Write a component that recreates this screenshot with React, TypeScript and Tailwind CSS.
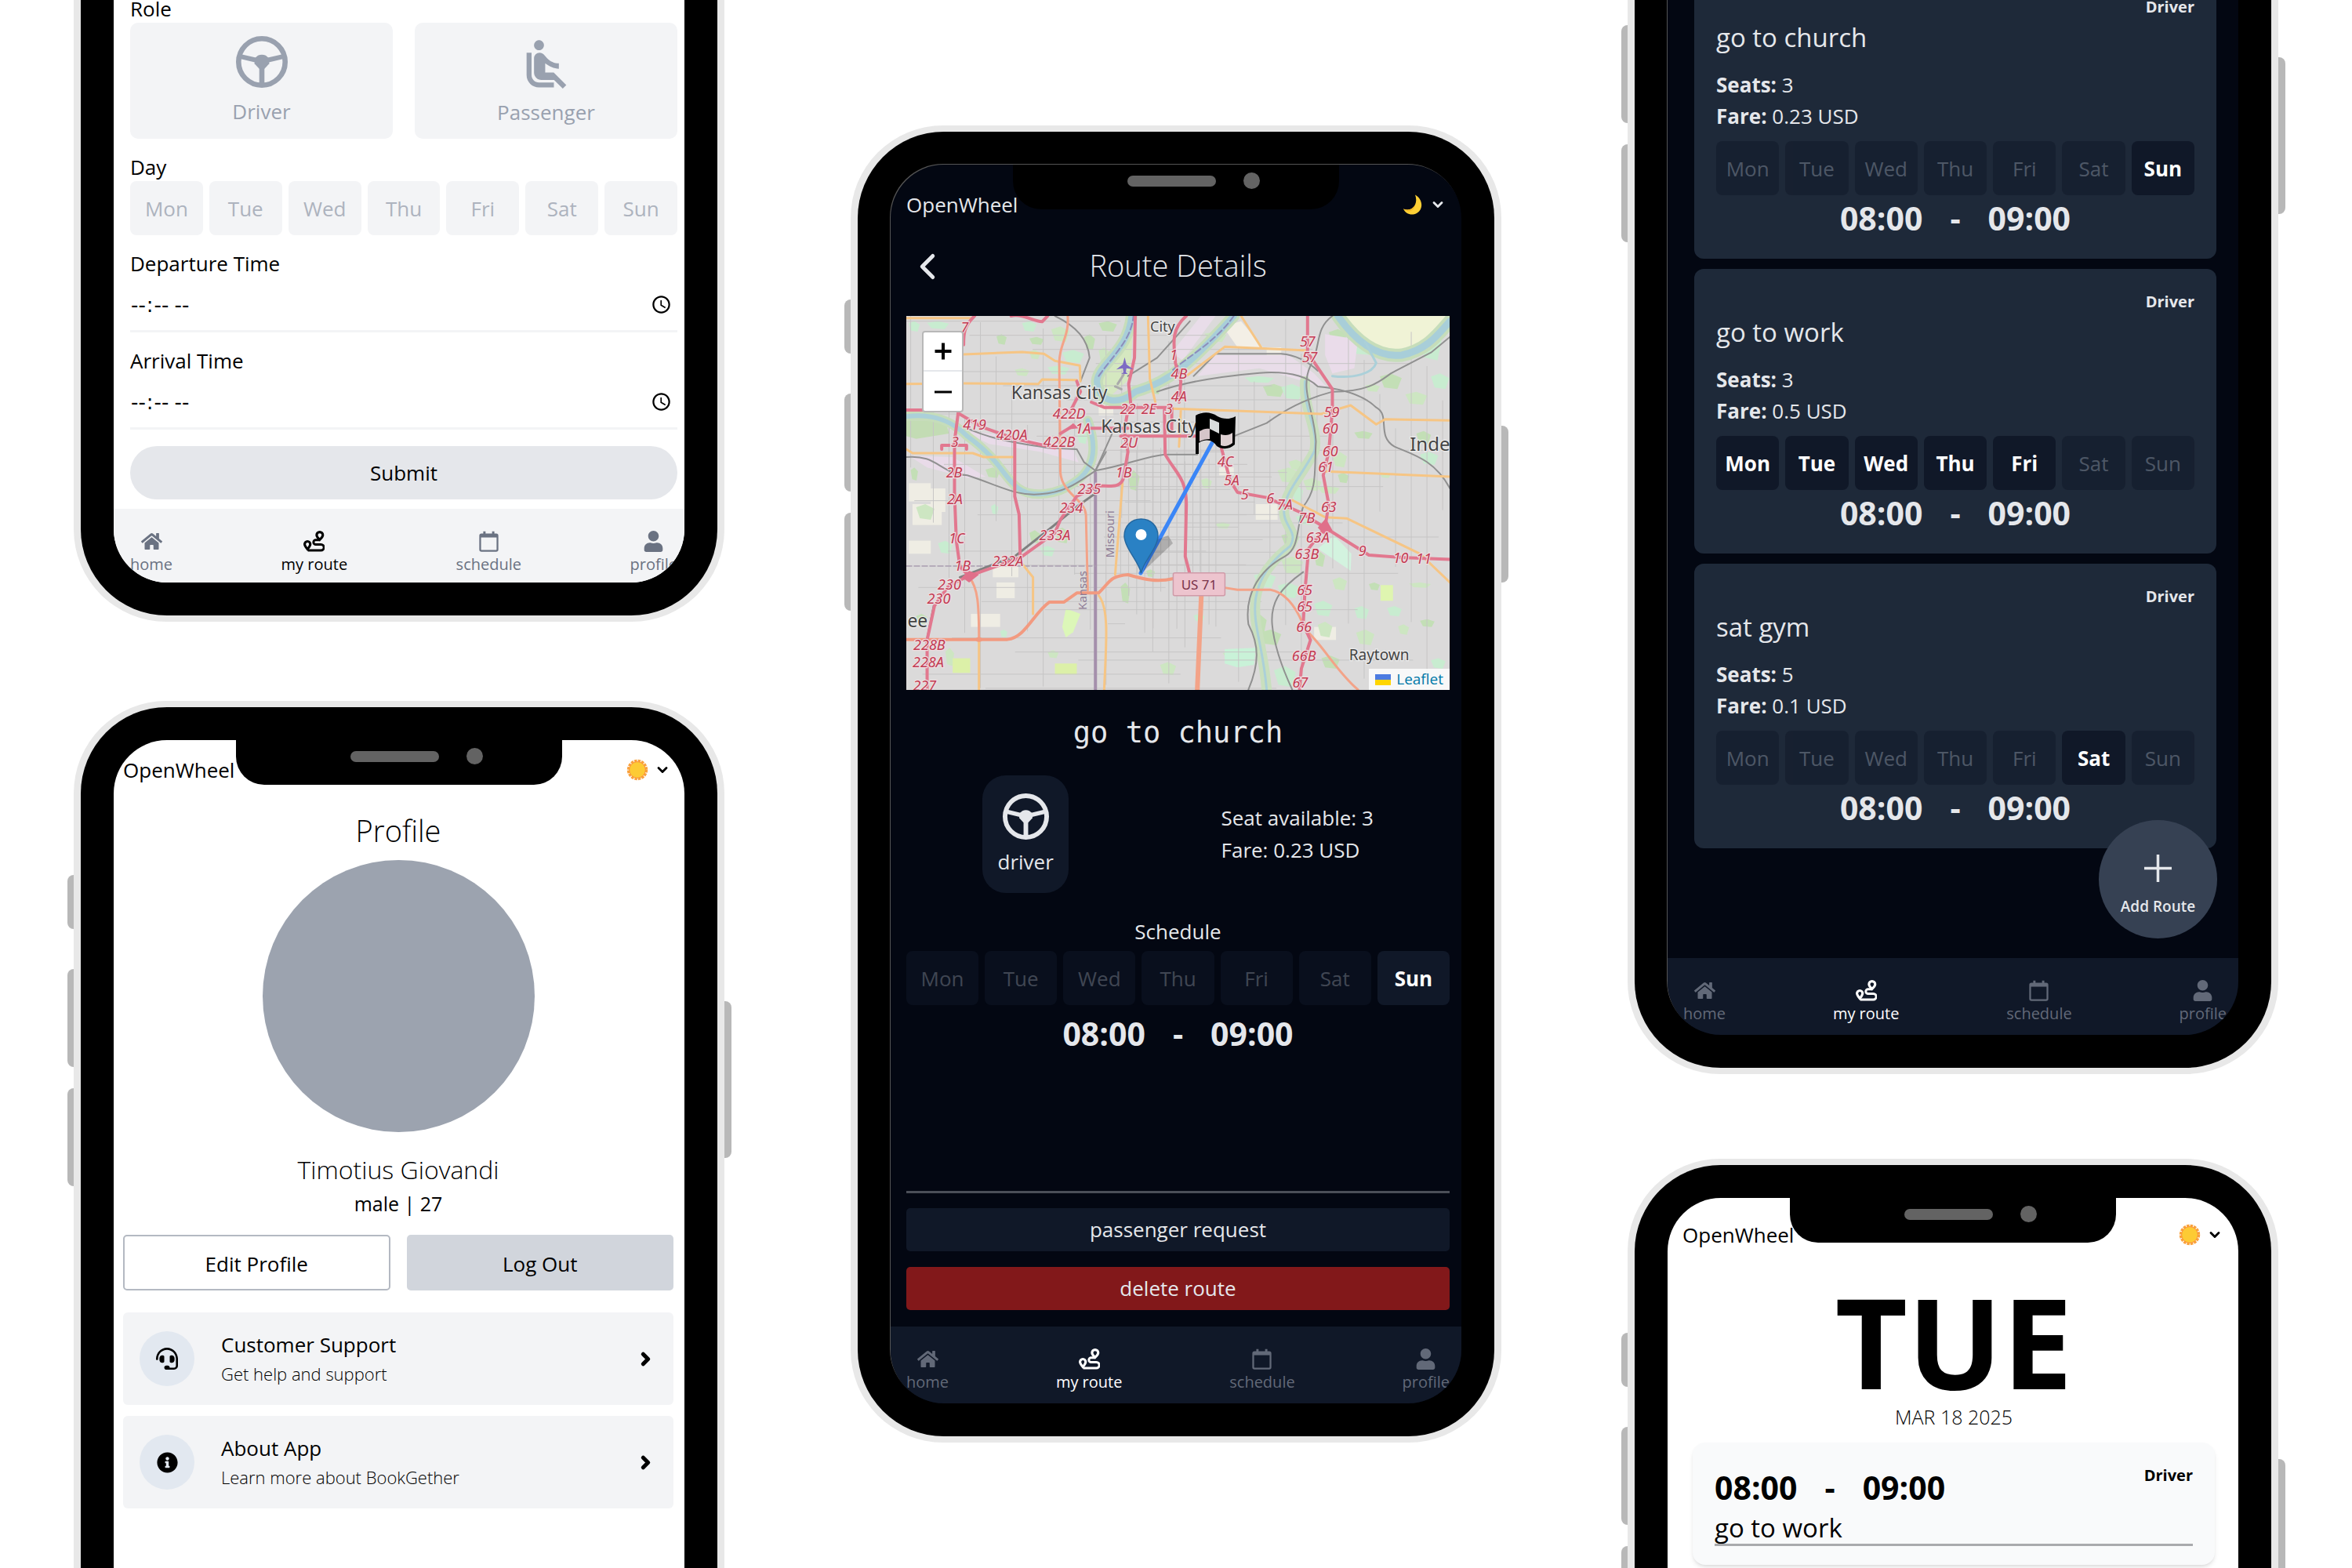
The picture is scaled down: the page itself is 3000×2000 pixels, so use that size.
import React from "react";
import { FaHeadset, FaHome, FaInfoCircle, FaUser } from "react-icons/fa";
import { MdAirlineSeatReclineNormal } from "react-icons/md";
import { ChevronDown, ChevronLeft, ChevronRight } from "lucide-react";

const DAYS = ["Mon", "Tue", "Wed", "Thu", "Fri", "Sat", "Sun"];

/* ---------- icons ---------- */

function SteeringWheel({ className }: { className?: string }) {
  return (
    <svg viewBox="0 0 24 24" fill="none" className={className} aria-hidden="true">
      <circle cx="12" cy="12" r="10.8" stroke="currentColor" strokeWidth="2.4" />
      <path d="M1.800 9.400 L9.400 11.200 M22.200 9.400 L14.600 11.200" stroke="currentColor" strokeWidth="2.2" />
      <path d="M12 13 V22.400" stroke="currentColor" strokeWidth="2.4" />
      <path
        d="M8.600 10.400 L10.200 9 Q12 8.200 13.800 9 L15.400 10.400 V12.800 L13.200 15.200 H10.800 L8.600 12.800 Z"
        fill="currentColor"
      />
    </svg>
  );
}

function RouteIcon({ className }: { className?: string }) {
  return (
    <svg viewBox="0 0 24 24" fill="none" stroke="currentColor" className={className} aria-hidden="true">
      <path
        d="M18.5 1.4 a3.5 3.5 0 0 1 3.5 3.5 c0 1.9 -3.5 5.3 -3.5 5.3 s-3.5 -3.4 -3.5 -5.3 a3.5 3.5 0 0 1 3.5 -3.5 Z"
        strokeWidth="2.8"
      />
      <path
        d="M4.6 12 a3.2 3.2 0 0 1 3.2 3.2 c0 1.9 -3.2 5.8 -3.2 5.8 s-3.2 -3.9 -3.2 -5.8 a3.2 3.2 0 0 1 3.2 -3.2 Z"
        strokeWidth="2.8"
      />
      <path d="M18 10.4 H14 a2.6 2.6 0 0 0 0 5.2 H20 a3 3 0 0 1 0 6.6 H5" strokeWidth="2.6" />
    </svg>
  );
}

function CalendarIcon({ className }: { className?: string }) {
  return (
    <svg viewBox="0 0 24 24" fill="none" stroke="currentColor" className={className} aria-hidden="true">
      <rect x="2.2" y="4.2" width="19.6" height="18.6" rx="1.4" strokeWidth="2" />
      <path d="M2.2 6 H21.8" strokeWidth="3.2" />
      <path d="M7 0.6 V5 M17 0.6 V5" strokeWidth="2.6" />
    </svg>
  );
}

function Sun() {
  return (
    <svg viewBox="0 0 28 28" className="size-7" aria-hidden="true">
      <circle cx="14" cy="14" r="11.4" fill="none" stroke="#f9a23c" strokeWidth="3.6" strokeDasharray="3.4 1.1" />
      <circle cx="14" cy="14" r="10.4" fill="#fdcb34" stroke="#fb923c" strokeWidth="1" />
    </svg>
  );
}

function Moon() {
  return (
    <svg viewBox="0 0 28 28" className="size-7" aria-hidden="true">
      <path d="M17 1.5 C27 7 28 20 19 25 C12.5 28.5 5 26 2 19.5 C9 22 14.5 19.5 17 14 C18.8 10 18.6 5.5 17 1.5 Z" fill="#fdcf35" />
      <path d="M2 19.5 C9 22 14.5 19.5 17 14 C16.5 21 9 26 2 19.5 Z" fill="#f5b924" />
    </svg>
  );
}

/* ---------- device ---------- */

function Phone({ dark, children }: { dark?: boolean; children: React.ReactNode }) {
  return (
    <div className="relative aspect-[83/168] w-full shrink-0">
      <div className="absolute top-[222px] -left-[8px] h-[69px] w-5 rounded-lg bg-[#b8b8b8]" />
      <div className="absolute top-[342px] -left-[8px] h-[125px] w-5 rounded-lg bg-[#b8b8b8]" />
      <div className="absolute top-[494px] -left-[8px] h-[125px] w-5 rounded-lg bg-[#b8b8b8]" />
      <div className="absolute top-[383px] -right-[9px] h-[200px] w-5 rounded-lg bg-[#b8b8b8]" />
      <div className="relative h-full rounded-[118px] bg-[#e8e8e8] px-[9px] py-2">
        <div className="h-full rounded-[110px] bg-black p-[42px]">
          <div
            className={
              dark
                ? "relative flex h-full flex-col overflow-hidden rounded-[68px] bg-gray-950 text-gray-200 shadow-[-1px_-1px_0_#555]"
                : "relative flex h-full flex-col overflow-hidden rounded-[68px] bg-white text-black"
            }
          >
            {children}
            <div className="absolute top-0 left-1/2 h-[57px] w-[416px] -translate-x-1/2 rounded-b-[36px] bg-black">
              <div className="absolute top-[14px] left-[146px] h-[14px] w-[113px] rounded-full bg-[#636363]" />
              <div className="absolute top-[10px] left-[294px] size-[21px] rounded-full bg-[#636363]" />
            </div>
          </div>
        </div>
      </div>
    </div>
  );
}

function AppBar({ dark, className }: { dark?: boolean; className: string }) {
  return (
    <header className={"flex items-center justify-between " + className}>
      <span className="text-[26px] leading-10">OpenWheel</span>
      <button type="button" aria-label="Theme" className="flex items-center gap-2">
        {dark ? <Moon /> : <Sun />}
        <ChevronDown className="size-5" strokeWidth={3.4} />
      </button>
    </header>
  );
}

function NavBar({ dark }: { dark?: boolean }) {
  const muted = dark ? "text-[#626978]" : "text-gray-500";
  const active = dark ? "text-white" : "text-black";
  const item = "flex flex-col items-center gap-[2px] ";
  return (
    <nav
      className={
        "mt-auto flex shrink-0 items-start justify-between pt-7 text-[20px] leading-7 " +
        (dark ? "bg-gray-900 pr-[15px] pb-[13px] pl-[20px]" : "bg-gray-100 pr-[9px] pb-[9px] pl-[21px]")
      }
    >
      <a href="#home" className={item + muted}>
        <FaHome className="size-[27px]" />
        home
      </a>
      <a href="#routes" className={item + active}>
        <RouteIcon className="size-[27px]" />
        my route
      </a>
      <a href="#schedule" className={item + muted}>
        <CalendarIcon className="size-[27px]" />
        schedule
      </a>
      <a href="#profile" className={item + muted}>
        <FaUser className="size-[27px]" />
        profile
      </a>
    </nav>
  );
}

function DayGrid({ active }: { active: string[] }) {
  return (
    <ul className="grid grid-cols-7 gap-2 text-[26px]">
      {DAYS.map((d) => (
        <li
          key={d}
          className={
            active.includes(d)
              ? "flex h-[69px] items-center justify-center rounded-lg bg-gray-900 pt-0.5 font-bold text-white"
              : "flex h-[69px] items-center justify-center rounded-lg bg-gray-900 pt-0.5 text-gray-400 opacity-50"
          }
        >
          <span className={active.includes(d) ? "" : "opacity-80"}>{d}</span>
        </li>
      ))}
    </ul>
  );
}

function TimeRange({ className }: { className?: string }) {
  return (
    <div className={"flex gap-[35px] text-[41px] leading-[48px] font-bold " + (className ?? "")}>
      <span>08:00</span>
      <span>-</span>
      <span>09:00</span>
    </div>
  );
}

/* ---------- screens ---------- */

function NewRouteScreen() {
  return (
    <>
      <form className="mt-auto flex flex-col gap-[18px] pr-[9px] pl-[21px] text-[26px] leading-9">
        <fieldset>
          <legend>Role</legend>
          <div className="grid grid-cols-2 gap-7 text-gray-400">
            <button type="button" className="flex h-[148px] flex-col items-center justify-center gap-3 rounded-[10px] bg-gray-100">
              <SteeringWheel className="size-[66px]" />
              Driver
            </button>
            <button type="button" className="flex h-[148px] flex-col items-center justify-center gap-1 rounded-[10px] bg-gray-100">
              <MdAirlineSeatReclineNormal className="size-[76px]" />
              Passenger
            </button>
          </div>
        </fieldset>
        <fieldset>
          <legend>Day</legend>
          <div className="grid grid-cols-7 gap-2 text-[#adb3be]">
            {DAYS.map((d) => (
              <button key={d} type="button" className="h-[69px] rounded-lg bg-gray-100">
                {d}
              </button>
            ))}
          </div>
        </fieldset>
        <label className="flex flex-col">
          Departure Time
          <input type="time" className="h-[70px] w-full border-b-[3px] border-gray-100 pt-[3px] pr-1 font-['DejaVu_Sans',sans-serif]" />
        </label>
        <label className="flex flex-col">
          Arrival Time
          <input type="time" className="h-[70px] w-full border-b-[3px] border-gray-100 pt-[3px] pr-1 font-['DejaVu_Sans',sans-serif]" />
        </label>
        <button type="submit" className="mt-[3px] mb-[12px] h-[68px] rounded-full bg-gray-200">
          Submit
        </button>
      </form>
      <div className="shrink-0">
        <NavBar />
      </div>
    </>
  );
}

function InfoCard({ icon, title, text }: { icon: React.ReactNode; title: string; text: string }) {
  return (
    <button type="button" className="flex h-[118px] items-center rounded-md bg-gray-100 pr-[23px] pl-[21px] text-left">
      <span className="mr-[34px] flex size-[70px] items-center justify-center rounded-full bg-slate-200">{icon}</span>
      <span className="flex flex-1 flex-col">
        <span className="text-[26px] leading-[38px]">{title}</span>
        <span className="text-[22px] leading-9 font-light">{text}</span>
      </span>
      <ChevronRight className="size-[25px]" strokeWidth={5} />
    </button>
  );
}

function ProfileScreen() {
  return (
    <>
      <AppBar className="pt-[18px] pr-[18px] pl-[12px]" />
      <main className="flex flex-col pr-[14px] pl-[12px]">
        <h1 className="mt-[29px] text-center text-[38px] leading-[56px] font-light">Profile</h1>
        <div className="mt-[10px] size-[347px] self-center rounded-full bg-[#9ca3af]" />
        <p className="mt-[26px] text-center text-[32px] leading-[44px] font-light">Timotius Giovandi</p>
        <p className="mt-[3px] text-center text-[25px] leading-9">male | 27</p>
        <div className="mt-[22px] grid grid-cols-2 gap-[21px] text-[26px]">
          <button type="button" className="h-[71px] rounded-[5px] border-2 border-[#b4b9c2] pt-1">
            Edit Profile
          </button>
          <button type="button" className="h-[71px] rounded-[5px] bg-gray-300 pt-1">
            Log Out
          </button>
        </div>
        <div className="mt-7 flex flex-col gap-[14px]">
          <InfoCard icon={<FaHeadset className="size-[28px]" />} title="Customer Support" text="Get help and support" />
          <InfoCard icon={<FaInfoCircle className="size-[27px]" />} title="About App" text="Learn more about BookGether" />
        </div>
      </main>
    </>
  );
}

/* ---------- map ---------- */

const EXITS: [string, number, number][] = [
  ["7", 193, 85], ["57", 1132, 140], ["57", 1138, 198], ["4B", 780, 263], ["4A", 780, 350], ["1", 765, 190],
  ["422D", 479, 415], ["22", 640, 397], ["2E", 697, 397], ["3", 752, 397], ["59", 1198, 410], ["60", 1194, 473],
  ["60", 1194, 560], ["61", 1182, 618], ["419", 220, 457], ["420A", 322, 497], ["422B", 452, 522], ["1A", 517, 471],
  ["2U", 643, 527], ["3", 166, 522], ["2B", 164, 641], ["2A", 166, 742], ["1B", 628, 641], ["4C", 907, 598],
  ["5A", 924, 669], ["235", 534, 703], ["234", 485, 776], ["5", 960, 725], ["6", 1030, 740], ["7A", 1070, 763],
  ["63", 1190, 773], ["7B", 1130, 815], ["233A", 440, 881], ["63A", 1160, 889], ["1C", 171, 892], ["63B", 1130, 952],
  ["9", 1282, 940], ["10", 1387, 967], ["11", 1450, 969], ["232A", 311, 980], ["1B", 187, 996], ["230", 151, 1068],
  ["230", 122, 1124], ["65", 1124, 1090], ["65", 1124, 1153], ["66", 1122, 1230], ["228B", 96, 1301], ["228A", 93, 1366],
  ["66B", 1122, 1342], ["67", 1112, 1445], ["227", 83, 1455],
];

const PARKS: [number, number, number, number][] = [
  [90, 60, 60, 30], [280, 110, 28, 40], [370, 170, 30, 36], [420, 230, 60, 34], [560, 60, 50, 40], [330, 240, 40, 30],
  [1240, 130, 90, 60], [1330, 260, 60, 60], [1400, 330, 60, 50], [1440, 90, 60, 120], [1260, 480, 50, 30], [1050, 620, 60, 60],
  [1090, 690, 30, 60], [640, 630, 32, 80], [60, 760, 50, 60], [120, 900, 40, 50], [60, 1180, 30, 40], [140, 1310, 24, 70],
  [265, 760, 20, 40], [1060, 870, 50, 50], [1200, 560, 40, 60], [985, 1020, 60, 60], [980, 1180, 40, 80], [900, 1320, 90, 50],
  [1040, 1380, 60, 80], [1150, 940, 30, 60], [1200, 1040, 40, 50], [1150, 1130, 50, 60], [620, 1060, 26, 80], [728, 1365, 44, 50],
  [500, 470, 30, 60], [700, 300, 30, 40], [850, 100, 60, 40], [960, 270, 80, 26], [1010, 300, 60, 50], [1160, 690, 60, 30],
  [1440, 560, 50, 50], [1300, 1060, 30, 30], [1410, 1060, 60, 20], [350, 60, 40, 40], [440, 850, 40, 60], [1265, 1240, 50, 60],
  [1350, 1150, 40, 40], [250, 620, 40, 40], [840, 660, 30, 40], [820, 1180, 30, 30], [690, 1010, 24, 30], [880, 830, 40, 24],
  [1060, 300, 60, 60], [1190, 90, 50, 60], [1290, 300, 40, 30], [1470, 260, 50, 60], [1430, 480, 40, 50], [1060, 960, 60, 70],
  [1050, 1060, 60, 60], [1000, 1240, 60, 60], [1160, 1210, 40, 60], [1260, 1150, 40, 50], [1170, 1340, 50, 50], [1120, 660, 50, 50],
  [1100, 800, 50, 40], [1215, 640, 30, 40], [430, 80, 50, 60], [460, 170, 60, 50], [370, 120, 40, 30], [1080, 590, 40, 40],
  [40, 60, 30, 40], [520, 110, 30, 60], [560, 160, 30, 60], [1470, 1350, 40, 40], [1440, 1200, 40, 30], [1380, 1220, 30, 40],
  [400, 920, 40, 40], [370, 860, 30, 50], [420, 1320, 30, 30], [290, 1240, 20, 30], [45, 620, 20, 50], [1330, 640, 30, 20],
];

const PALE: [number, number, number, number][] = [
  [40, 680, 60, 70], [50, 760, 80, 80], [100, 700, 40, 90], [270, 990, 70, 50], [40, 900, 60, 50], [990, 760, 60, 60],
  [280, 1060, 50, 60], [210, 1180, 80, 50], [1150, 1230, 60, 50], [1020, 160, 40, 40], [890, 620, 40, 30], [560, 380, 40, 40],
];

function MapDrawing() {
  const fit = "scale(0.4657 0.3333) translate(-33 -40)";
  const px = (x: number) => (x - 33) * 0.4657;
  const py = (y: number) => (y - 40) / 3;
  const streetsX = Array.from({ length: 34 }, (_, i) => 45 + i * 44 + ((i * 37) % 19));
  const streetsY = Array.from({ length: 30 }, (_, i) => 60 + i * 48 + ((i * 29) % 23));
  return (
    <svg viewBox="0 0 693 477" preserveAspectRatio="xMidYMid slice" className="block h-full w-full" role="img" aria-label="Map of Kansas City">
      <rect width="693" height="477" fill="#dbdada" />
      <g transform={fit} fill="none">
        {PALE.map(([x, y, w, h], i) => (
          <rect key={i} x={x} y={y} width={w} height={h} fill="#efede4" />
        ))}
        {PARKS.map(([x, y, w, h], i) => (
          <path
            key={i}
            d={`M${x} ${y + h * 0.2} L${x + w * 0.5} ${y} L${x + w} ${y + h * 0.3} L${x + w * 0.8} ${y + h} L${x + w * 0.2} ${y + h * 0.9} Z`}
            fill={i % 3 === 0 ? "#c8ecd0" : i % 3 === 1 ? "#c3dfb6" : "#cde6c2"}
          />
        ))}
        {/* industrial and farm land */}
        <path d="M1225 40 H1510 L1480 110 L1400 185 L1330 180 L1260 110 Z" fill="#f0f3d6" />
        <path d="M1180 110 L1270 130 L1260 240 L1200 260 L1180 190 Z" fill="#eadcea" />
        <path d="M880 190 L1080 190 L1150 260 L1190 320 L1120 290 L1000 240 L830 270 Z" fill="#e9dde9" />
        <path d="M760 180 L840 40 L880 40 L790 210 Z" fill="#e9dde9" />
        <path d="M40 575 L160 580 L250 655 L200 660 L90 620 Z" fill="#e9dbe9" />
        <path d="M190 480 L330 500 L490 550 L505 600 L400 560 L260 530 Z" fill="#e9dbe9" />
        <path d="M900 80 L950 60 L1010 160 L940 160 Z" fill="#f3efe6" />
        <path d="M640 50 L655 60 L645 280 L590 350 L560 310 L600 190 Z" fill="#d5e8c0" />
        <path d="M33 440 L140 440 L150 490 L60 510 L33 500 Z" fill="#c3dcb4" />
        <path d="M1160 930 L1205 880 L1252 950 L1250 1015 Z" fill="#d3f3df" />
        <path d="M905 1315 L990 1310 L985 1375 L940 1385 L905 1370 Z" fill="#c9f2d8" />
        <path d="M470 1160 L510 1180 L490 1250 L470 1270 L460 1230 Z" fill="#dcf7b8" />
        <rect x="160" y="1350" width="48" height="56" fill="#dcf0a8" />
        <rect x="440" y="1370" width="60" height="42" fill="#dcf0a8" />
        <rect x="1332" y="1070" width="34" height="60" fill="#dff5b0" />
        {/* minor streets */}
        <g stroke="#c6c5c5" strokeWidth="1">
          {streetsX.map((x, i) => (
            <path key={i} d={`M${x} ${40 + ((i * 131) % 500)} V${620 + ((i * 211) % 850)}`} vectorEffect="non-scaling-stroke" />
          ))}
          {streetsY.map((y, i) => (
            <path key={i} d={`M${33 + ((i * 173) % 600)} ${y} H${620 + ((i * 263) % 900)}`} vectorEffect="non-scaling-stroke" />
          ))}
          {Array.from({ length: 12 }, (_, i) => (
            <path key={i} d={`M${620 + i * 22} ${540 + ((i * 37) % 60)} V${1040 + ((i * 71) % 300)}`} vectorEffect="non-scaling-stroke" />
          ))}
          {Array.from({ length: 10 }, (_, i) => (
            <path key={i} d={`M${620 + ((i * 13) % 40)} ${560 + i * 48} H${900 + ((i * 67) % 180)}`} vectorEffect="non-scaling-stroke" />
          ))}
        </g>
        {/* greenbelt and rivers */}
        <g strokeLinecap="round" strokeLinejoin="round">
          <path d="M33 425 C110 410 165 450 200 500 C290 590 300 660 340 700 C380 740 450 720 490 680 C560 620 550 520 530 440" stroke="#c6ddba" strokeWidth="12" vectorEffect="non-scaling-stroke" />
          <path d="M650 40 C640 180 560 220 555 290 C560 380 620 380 660 330 C760 290 820 210 930 40" stroke="#c6ddba" strokeWidth="15" vectorEffect="non-scaling-stroke" />
          <path d="M1215 40 C1260 130 1320 200 1390 190 C1460 170 1490 110 1522 60" stroke="#c6ddba" strokeWidth="17" vectorEffect="non-scaling-stroke" />
          <path d="M33 425 C110 410 165 450 200 500 C290 590 300 660 340 700 C380 740 450 720 490 680 C560 620 550 520 530 440" stroke="#abd0d9" strokeWidth="6" vectorEffect="non-scaling-stroke" />
          <path d="M650 40 C640 180 560 220 555 290 C560 380 620 380 660 330 C760 290 820 210 930 40" stroke="#a8ced9" strokeWidth="8" vectorEffect="non-scaling-stroke" />
          <path d="M1215 40 C1260 130 1320 200 1390 190 C1460 170 1490 110 1522 60" stroke="#a8ced9" strokeWidth="9" vectorEffect="non-scaling-stroke" />
          <path d="M1125 290 C1120 400 1165 480 1150 560 C1120 640 1080 700 1070 760 C1055 840 1110 860 1085 920 C1030 980 1000 1040 990 1120 C980 1220 1010 1300 1020 1470" stroke="#c9dfbe" strokeWidth="13" vectorEffect="non-scaling-stroke" />
          <path d="M1125 290 C1120 400 1165 480 1150 560 C1120 640 1080 700 1070 760 C1055 840 1110 860 1085 920 C1030 980 1000 1040 990 1120 C980 1220 1010 1300 1020 1470" stroke="#abd0d9" strokeWidth="3" vectorEffect="non-scaling-stroke" />
          <path d="M1200 270 C1260 280 1310 260 1320 220 L1290 140" stroke="#abd0d9" strokeWidth="3" vectorEffect="non-scaling-stroke" />
          <path d="M560 270 C600 190 650 130 655 40 M930 40 C880 140 800 200 760 250" stroke="#8c8dbc" strokeWidth="2" strokeDasharray="8 4" vectorEffect="non-scaling-stroke" />
          {/* state line */}
          <path d="M551 640 V1470" stroke="#a58fab" strokeWidth="4" vectorEffect="non-scaling-stroke" />
          <path d="M33 997 H551" stroke="#a99db0" strokeWidth="1.5" strokeDasharray="7 3" vectorEffect="non-scaling-stroke" />
          {/* railways */}
          <g stroke="#909090" strokeWidth="2">
            <path d="M33 580 C120 570 120 640 200 650 C290 690 330 730 400 722 C470 715 500 680 551 632 C640 610 680 580 740 570 L830 570" vectorEffect="non-scaling-stroke" />
            <path d="M200 470 C280 520 360 530 420 545 L500 550 L520 600 L551 632 L600 480" vectorEffect="non-scaling-stroke" />
            <path d="M440 40 C500 80 530 130 535 200 L510 290" vectorEffect="non-scaling-stroke" />
            <path d="M551 632 L580 560 M930 500 L1020 450 C1070 400 1120 360 1200 330 C1300 330 1330 290 1360 260 L1470 180 L1522 120" vectorEffect="non-scaling-stroke" />
            <path d="M720 330 C800 290 900 270 1000 258 C1080 250 1130 270 1160 310 C1240 320 1290 350 1320 390 C1360 420 1320 500 1370 540 C1420 570 1480 590 1522 700" vectorEffect="non-scaling-stroke" />
            <path d="M1200 40 C1150 90 1170 160 1140 230 C1110 320 1150 400 1155 520 C1150 640 1160 700 1120 770 C1100 860 1110 930 1070 960 C990 1020 960 1120 970 1220 C1000 1300 1000 1370 970 1470" vectorEffect="non-scaling-stroke" />
            <path d="M1120 1020 C1060 1080 1030 1130 1035 1220 C1040 1300 1060 1380 1090 1470" vectorEffect="non-scaling-stroke" />
            <path d="M820 270 L880 185 L1060 185 C1100 190 1130 210 1160 250 M640 270 L720 200 L810 60" vectorEffect="non-scaling-stroke" />
            <path d="M180 1040 L330 960 L430 850 L500 770 L550 720 M110 1140 L90 1280" stroke="#808080" strokeWidth="3" vectorEffect="non-scaling-stroke" />
          </g>
          {/* secondary roads */}
          <g stroke="#f6c584" strokeWidth="3">
            <path d="M33 48 H210 M190 187 L350 178 L410 185 L440 212 L508 230 L510 290" vectorEffect="non-scaling-stroke" />
            <path d="M33 300 L190 298 L395 300 L405 283 L500 285" vectorEffect="non-scaling-stroke" />
            <path d="M33 550 L50 565 L215 565 L245 580 L325 580" vectorEffect="non-scaling-stroke" />
            <path d="M695 40 L700 280 L715 370 M785 400 L780 540 M760 395 L920 402 L1170 415 L1250 382 L1320 455 L1345 435 L1522 440" vectorEffect="non-scaling-stroke" />
            <path d="M800 270 L905 158 L1130 172 M950 40 L1005 160" vectorEffect="non-scaling-stroke" />
            <path d="M1180 635 L1522 655 M1090 745 L1180 810 L1240 815 L1440 950 L1522 1060" vectorEffect="non-scaling-stroke" />
            <path d="M625 680 L605 1030 M345 980 L380 1040 V1180 M560 1110 C590 1160 580 1300 575 1470 M232 1280 V1470" vectorEffect="non-scaling-stroke" />
          </g>
          {/* trunk roads */}
          <g stroke="#f3a388" strokeWidth="3">
            <path d="M475 40 C480 120 450 150 452 230 L455 640 C460 720 520 740 525 800 L530 1090" vectorEffect="non-scaling-stroke" />
            <path d="M33 1278 H310 C360 1270 380 1180 425 1135 H465 L500 1100 L560 1100 C590 1060 590 1035 640 1030 C690 1050 720 1060 765 1045" stroke="#f29a80" strokeWidth="4" vectorEffect="non-scaling-stroke" />
            <path d="M905 1080 L940 1088 H1030 C1080 1100 1110 1180 1125 1240 C1170 1290 1210 1400 1270 1470" vectorEffect="non-scaling-stroke" />
            <path d="M841 1110 L830 1470" strokeWidth="6" vectorEffect="non-scaling-stroke" />
            <path d="M205 1040 C230 1080 232 1150 232 1278" vectorEffect="non-scaling-stroke" />
          </g>
          <circle cx="232" cy="1278" r="9" fill="#f29a80" />
          {/* motorways */}
          <g stroke="#e2788f" strokeWidth="4">
            <path d="M220 40 C190 80 190 110 190 150 M320 40 C350 30 380 60 405 62 L420 40" vectorEffect="non-scaling-stroke" />
            <path d="M33 400 H100 M175 412 L165 520 L165 720 L170 900 L180 1000 L205 1035" vectorEffect="non-scaling-stroke" />
            <path d="M175 412 L240 465 L330 510 L440 545 M330 510 V730 L342 800 L345 960" vectorEffect="non-scaling-stroke" />
            <path d="M130 550 V535 H198 V550" vectorEffect="non-scaling-stroke" />
            <path d="M660 40 L658 200 L642 300 L648 380 M490 460 L455 490 M500 290 L510 330 L480 410 M540 370 L575 390 H760 V480" vectorEffect="non-scaling-stroke" />
            <path d="M530 470 H640 M640 400 L630 480 L640 560 L628 660 C620 700 590 690 560 690 L500 730 L455 820 L440 870 L345 965 L205 1035 L150 1070 L110 1150 L90 1280 L90 1470" vectorEffect="non-scaling-stroke" />
            <path d="M620 500 L830 500 M740 400 L742 570 C770 640 800 660 800 760 L797 960 L810 1030" vectorEffect="non-scaling-stroke" />
            <path d="M800 40 C750 100 770 170 770 220 L785 290 L780 370" vectorEffect="non-scaling-stroke" />
            <path d="M895 540 L920 670 L940 715 L1020 735 L1110 790 L1180 850 L1300 955 L1400 965 L1522 972" vectorEffect="non-scaling-stroke" />
            <path d="M1132 40 V180 L1200 320 V400 L1190 560 L1175 650 L1190 760 L1180 850 L1135 930 L1125 1090 L1120 1220 L1140 1280 L1115 1390 L1110 1470" vectorEffect="non-scaling-stroke" />
          </g>
          <path d="M185 1040 L205 1015 L232 1030 L205 1060 Z M1160 850 L1182 815 L1200 860 L1180 880 Z M470 475 L490 450 L505 470 Z" fill="#e0708a" />
          {/* airport */}
          <path d="M631 198 L636 225 L655 245 L636 240 L634 255 L640 262 H622 L628 255 L626 240 L608 245 L626 225 Z" fill="#7d6bc4" />
          <path d="M612 300 L628 265 M605 310 L622 320" stroke="#aaa" strokeWidth="3" vectorEffect="non-scaling-stroke" />
        </g>
      </g>

      <g fontFamily="Noto Sans, sans-serif" textAnchor="middle">
        <g fontSize="18" fontStyle="italic" fill="#c23a52" stroke="#eedde0" strokeWidth="2.4" paintOrder="stroke">
          {EXITS.map(([t, x, y], i) => (
            <text key={i} x={px(x)} y={py(y) + 6}>
              {t}
            </text>
          ))}
        </g>
        <g fill="#444" stroke="#f2f2f2" strokeOpacity="0.8" strokeWidth="2.4" paintOrder="stroke">
          <text x={px(735)} y={py(82) + 6} fontSize="18">City</text>
          <text x={px(452)} y={py(338) + 7} fontSize="23">Kansas City</text>
          <text x={px(698)} y={py(467) + 7} fontSize="23">Kansas City</text>
          <text x={px(1412)} y={py(535) + 7} fontSize="24" textAnchor="start">Inde</text>
          <text x={px(36)} y={py(1210) + 7} fontSize="23" textAnchor="start">ee</text>
          <text x={px(1328)} y={py(1338) + 6} fontSize="19">Raytown</text>
        </g>
        <g fill="#8d7a95" fontSize="15">
          <text transform={`translate(${px(603)} ${py(875)}) rotate(-90)`}>Missouri</text>
          <text transform={`translate(${px(526)} ${py(1090)}) rotate(-90)`}>Kansas</text>
        </g>
        <rect x={px(764)} y={py(1023)} width="66" height="29" rx="2" fill="#edc4ce" stroke="#cf9aa8" strokeWidth="1.5" />
        <text x={px(835)} y={py(1068) + 6} fontSize="17" fill="#7a3248">US 71</text>
      </g>

      {/* route line, start pin and finish flag */}
      <path d="M299 328 L390 162" stroke="#3b86f7" strokeWidth="5" strokeLinecap="round" />
      <path d="M302 326 L340 290 L334 280 L318 286 Z" fill="#000" opacity="0.2" />
      <path
        d="M299.500 328 C297 314 279 297 278 281 C278 268 287 259 299.500 259 C312 259 321 268 321 281 C320 297 302 314 299.500 328 Z"
        fill="#2a81c4"
        stroke="#2568a0"
        strokeWidth="1.5"
      />
      <circle cx="299.500" cy="279" r="7" fill="#fff" />
      <g>
        <path d="M369 127 V176 H373 V162 C384 155 392 160 396 166 C404 171 412 170 419 164 L420 128 C411 133 403 131 397 128 C388 122 378 122 369 127 Z" fill="#000" />
        <path d="M387 131 L399 136 V150 L387 144 Z" fill="#d9dcdc" />
        <path d="M374 147 C379 144 383 143 387 144 V157 C382 157 378 158 374 160 Z" fill="#d6c5c9" />
        <path d="M401 151 C407 153 412 152 416 149 V162 C411 166 406 167 401 165 Z" fill="#dfd0d2" />
      </g>
    </svg>
  );
}

function RouteMap() {
  return (
    <div className="relative h-[477px] overflow-hidden">
      <MapDrawing />
      <div className="absolute top-[19px] left-[20px] flex w-[53px] flex-col rounded border-2 border-[#b8b8b8] bg-white text-black">
        <button type="button" aria-label="Zoom in" className="flex h-[50px] items-center justify-center border-b-2 border-gray-200">
          <svg viewBox="0 0 24 24" className="size-6" stroke="currentColor" strokeWidth="4" aria-hidden="true">
            <path d="M12 1.500 V22.500 M1.500 12 H22.500" />
          </svg>
        </button>
        <button type="button" aria-label="Zoom out" className="flex h-[50px] items-center justify-center">
          <svg viewBox="0 0 24 24" className="size-6" stroke="currentColor" strokeWidth="3" aria-hidden="true">
            <path d="M1 13 H23" />
          </svg>
        </button>
      </div>
      <a href="#leaflet" className="absolute right-0 bottom-0 flex items-center gap-[7px] bg-white/80 px-2 text-[19px] leading-[27px] text-[#0078a8]">
        <svg viewBox="0 0 20 14" className="h-[14px] w-5" aria-hidden="true">
          <rect width="20" height="7" fill="#4c7be1" />
          <rect y="7" width="20" height="7" fill="#ffd500" />
        </svg>
        Leaflet
      </a>
    </div>
  );
}

function DetailsScreen() {
  return (
    <>
      <AppBar dark className="pt-[31px] pr-[20px] pl-[20px]" />
      <main className="flex flex-1 flex-col pr-[15px] pl-[20px]">
        <div className="mt-7 grid grid-cols-[52px_1fr_52px] items-center">
          <button type="button" aria-label="Back">
            <ChevronLeft className="mt-1 size-[54px]" strokeWidth={2.2} />
          </button>
          <h1 className="text-center text-[38px] leading-[56px] font-light">Route Details</h1>
        </div>
        <div className="mt-[36px]">
          <RouteMap />
        </div>
        <h2 className="mt-[31px] text-center font-['DejaVu_Sans_Mono',monospace] text-[37px] leading-[48px]">go to church</h2>
        <div className="mt-[30px] flex items-center justify-around text-[26px]">
          <div className="flex h-[150px] w-[110px] flex-col items-center justify-center gap-[10px] rounded-[30px] bg-gray-900 leading-9">
            <SteeringWheel className="size-[59px]" />
            driver
          </div>
          <div className="leading-[41px]">
            <p>Seat available: 3</p>
            <p>Fare: 0.23 USD</p>
          </div>
        </div>
        <h3 className="mt-[31px] mb-[7px] text-center text-[26px] leading-9">Schedule</h3>
        <DayGrid active={["Sun"]} />
        <TimeRange className="mt-[12px] justify-center" />
        <hr className="mt-auto border-t-[3px] border-[#4b4f58]" />
        <div className="mt-[19px] mb-[21px] flex flex-col gap-[20px] text-[26px]">
          <button type="button" className="h-[55px] rounded-[5px] bg-gray-900">
            passenger request
          </button>
          <button type="button" className="h-[55px] rounded-[5px] bg-[#82181a]">
            delete route
          </button>
        </div>
      </main>
      <NavBar dark />
    </>
  );
}

const ROUTES = [
  { name: "go to church", seats: 3, fare: "0.23", days: ["Sun"] },
  { name: "go to work", seats: 3, fare: "0.5", days: ["Mon", "Tue", "Wed", "Thu", "Fri"] },
  { name: "sat gym", seats: 5, fare: "0.1", days: ["Sat"] },
];

function RoutesScreen() {
  return (
    <>
      <main className="mt-auto flex flex-col gap-[13px] pr-[28px] pb-[140px] pl-[34px]">
        {ROUTES.map((r) => (
          <article key={r.name} className="flex flex-col rounded-xl bg-gray-800 p-7">
            <p className="text-right text-[20px] leading-7 font-bold">Driver</p>
            <h2 className="mt-[3px] text-[33px] leading-[44px]">{r.name}</h2>
            <p className="mt-[18px] text-[26px] leading-10">
              <b>Seats:</b> {r.seats}
            </p>
            <p className="mb-[12px] text-[26px] leading-10">
              <b>Fare:</b> {r.fare} USD
            </p>
            <DayGrid active={r.days} />
            <TimeRange className="mt-[5px] justify-center" />
          </article>
        ))}
      </main>
      <div className="shrink-0">
        <NavBar dark />
      </div>
      <button
        type="button"
        className="absolute right-[27px] bottom-[123px] flex size-[151px] flex-col items-center justify-center gap-[17px] rounded-full bg-gray-700 pt-4 text-[19px] leading-7 font-semibold"
      >
        <svg viewBox="0 0 34 34" className="size-[35px]" stroke="currentColor" strokeWidth="3.400" aria-hidden="true">
          <path d="M17 0 V34 M0 17 H34" />
        </svg>
        Add Route
      </button>
    </>
  );
}

function ScheduleScreen() {
  return (
    <>
      <AppBar className="pt-[27px] pr-[20px] pl-[19px]" />
      <main className="flex flex-col pr-[30px] pl-[32px]">
        <h1 className="mt-[35px] text-center text-[160px] leading-[160px] font-bold">TUE</h1>
        <p className="text-center text-[25px] leading-[34px] font-light">MAR 18 2025</p>
        <article className="mt-[16px] rounded-2xl bg-gray-50 px-7 pt-7 pb-6 shadow-md">
          <div className="flex items-start justify-between">
            <TimeRange className="pt-[5px]" />
            <span className="text-[20px] leading-7 font-bold">Driver</span>
          </div>
          <h2 className="mt-2 border-b-[3px] border-[#a9aaad] text-[33px] leading-10">go to work</h2>
        </article>
      </main>
    </>
  );
}

export default function App() {
  return (
    <div className="grid h-screen grid-cols-3 gap-[161px] overflow-hidden bg-white px-[94px] font-['Open_Sans','Noto_Sans',sans-serif]">
      <section className="-mt-[887px] flex flex-col gap-[101px]">
        <Phone>
          <NewRouteScreen />
        </Phone>
        <Phone>
          <ProfileScreen />
        </Phone>
      </section>
      <section className="mt-[160px]">
        <Phone dark>
          <DetailsScreen />
        </Phone>
      </section>
      <section className="-mt-[310px] flex flex-col gap-[108px]">
        <Phone dark>
          <RoutesScreen />
        </Phone>
        <Phone>
          <ScheduleScreen />
        </Phone>
      </section>
    </div>
  );
}
